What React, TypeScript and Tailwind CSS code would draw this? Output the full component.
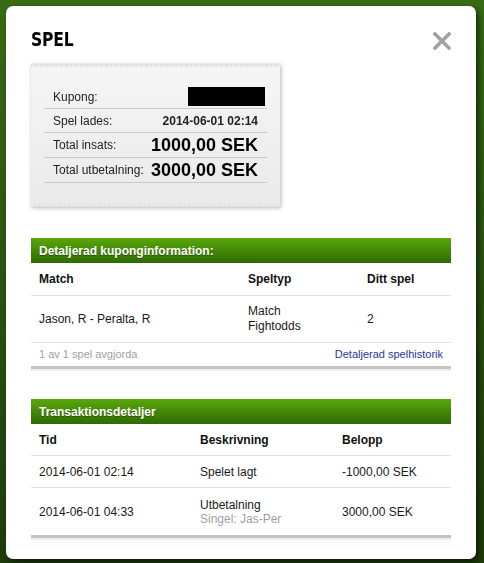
import React from 'react';

const font = { fontFamily: '"Liberation Sans", Arial, sans-serif' };

function Zigzag({ flip }: { flip?: boolean }) {
  // scalloped receipt edge
  return (
    <svg width="249" height="4" viewBox="0 0 249 4" className={flip ? 'block rotate-180' : 'block'}>
      <defs>
        <pattern id={flip ? 'zzb' : 'zzt'} width="5" height="4" patternUnits="userSpaceOnUse">
          <path d="M0 4 L0 2 Q1.25 0 2.5 2 Q3.75 0 5 2 L5 4 Z" fill="#f5f5f5" stroke="#d0d0d0" strokeWidth="0.8" />
        </pattern>
      </defs>
      <rect width="249" height="4" fill={`url(#${flip ? 'zzb' : 'zzt'})`} />
    </svg>
  );
}

function CloseIcon() {
  return (
    <svg width="18" height="18" viewBox="0 0 18 18">
      <path d="M2 2 L16 16 M16 2 L2 16" stroke="#a2a2a2" strokeWidth="3.6" strokeLinecap="square" />
    </svg>
  );
}

function CardRow({ label, children, tall }: { label: string; children: React.ReactNode; tall?: boolean }) {
  return (
    <div
      className={`flex items-center justify-between ${tall ? 'h-[25px]' : 'h-[24px]'} pl-[9px] pr-[9px] border-b border-[#c9c9c9] text-[12px] text-[#222]`}
    >
      <span>{label}</span>
      {children}
    </div>
  );
}

function GreenBar({ title }: { title: string }) {
  return (
    <div className="h-[25px] flex items-center pl-2 bg-gradient-to-b from-[#5aa80b] to-[#2f6a05] text-white text-[12px] font-bold [text-shadow:0_1px_0_rgba(0,0,0,0.35)]">
      {title}
    </div>
  );
}

function BottomBar() {
  return (
    <div>
      <div className="h-[3px] bg-[#c4c4c4]" />
      <div className="h-[2px] bg-[#ececec]" />
    </div>
  );
}

export default function App() {
  return (
    <div className="w-[484px] h-[563px] pt-[6px] pl-[6px] bg-gradient-to-b from-[#386c14] to-[#1e3c0c]" style={font}>
      <div className="w-[470px] h-[553px] bg-white rounded-[7px] shadow-[3px_3px_6px_rgba(0,0,0,0.55)] px-[25px] pt-[21px]">
        {/* Title */}
        <div className="flex items-center justify-between h-[24px]">
          <h1
            className="inline-block origin-left scale-x-[0.78] text-[20px] font-bold text-black tracking-[-0.2px]"
            style={{ fontFamily: '"DejaVu Sans", sans-serif' }}
          >
            SPEL
          </h1>
          <div className="pt-[3px]">
            <CloseIcon />
          </div>
        </div>

        {/* Coupon receipt */}
        <div className="mt-[12px] w-[249px] drop-shadow-[1px_1px_2px_rgba(0,0,0,0.28)]">
          <Zigzag />
          <div className="bg-gradient-to-b from-[#f5f5f5] to-[#eaeaea] px-[13px] pt-[18px] pb-[21px]">
            <CardRow label="Kupong:">
              <div className="w-[77px] h-[19px] bg-black -mr-[7px]" />
            </CardRow>
            <CardRow label="Spel lades:">
              <span className="font-bold">2014-06-01 02:14</span>
            </CardRow>
            <CardRow label="Total insats:" tall>
              <span className="font-bold text-[18px] text-black">1000,00 SEK</span>
            </CardRow>
            <CardRow label="Total utbetalning:" tall>
              <span className="font-bold text-[18px] text-black">3000,00 SEK</span>
            </CardRow>
          </div>
          <Zigzag flip />
        </div>

        {/* Detailed coupon info */}
        <div className="mt-[30px]">
          <GreenBar title="Detaljerad kuponginformation:" />
          <div className="grid grid-cols-[209px_119px_1fr] px-2 h-[33px] items-center border-b border-[#e2e2e2] text-[12px] font-bold text-[#111]">
            <span>Match</span>
            <span>Speltyp</span>
            <span>Ditt spel</span>
          </div>
          <div className="grid grid-cols-[209px_119px_1fr] px-2 h-[47px] items-center border-b border-[#e2e2e2] text-[12px] text-[#1a1a1a] leading-[15px]">
            <span>Jason, R - Peralta, R</span>
            <span>
              Match
              <br />
              Fightodds
            </span>
            <span>2</span>
          </div>
          <div className="flex items-center justify-between px-2 h-[23px] text-[11px]">
            <span className="text-[#a0a0a0]">1 av 1 spel avgjorda</span>
            <span className="text-[#23399a]">Detaljerad spelhistorik</span>
          </div>
          <BottomBar />
        </div>

        {/* Transactions */}
        <div className="mt-[28px]">
          <GreenBar title="Transaktionsdetaljer" />
          <div className="grid grid-cols-[161px_142px_1fr] px-2 h-[32px] items-center border-b border-[#e2e2e2] text-[12px] font-bold text-[#111]">
            <span>Tid</span>
            <span>Beskrivning</span>
            <span>Belopp</span>
          </div>
          <div className="grid grid-cols-[161px_142px_1fr] px-2 h-[32px] items-center border-b border-[#e2e2e2] text-[12px] text-[#1a1a1a]">
            <span>2014-06-01 02:14</span>
            <span>Spelet lagt</span>
            <span>-1000,00 SEK</span>
          </div>
          <div className="grid grid-cols-[161px_142px_1fr] px-2 h-[47px] items-center text-[12px] text-[#1a1a1a] leading-[14px]">
            <span>2014-06-01 04:33</span>
            <span>
              Utbetalning
              <br />
              <span className="text-[#a0a0a0]">Singel: Jas-Per</span>
            </span>
            <span>3000,00 SEK</span>
          </div>
          <BottomBar />
        </div>
      </div>
    </div>
  );
}
